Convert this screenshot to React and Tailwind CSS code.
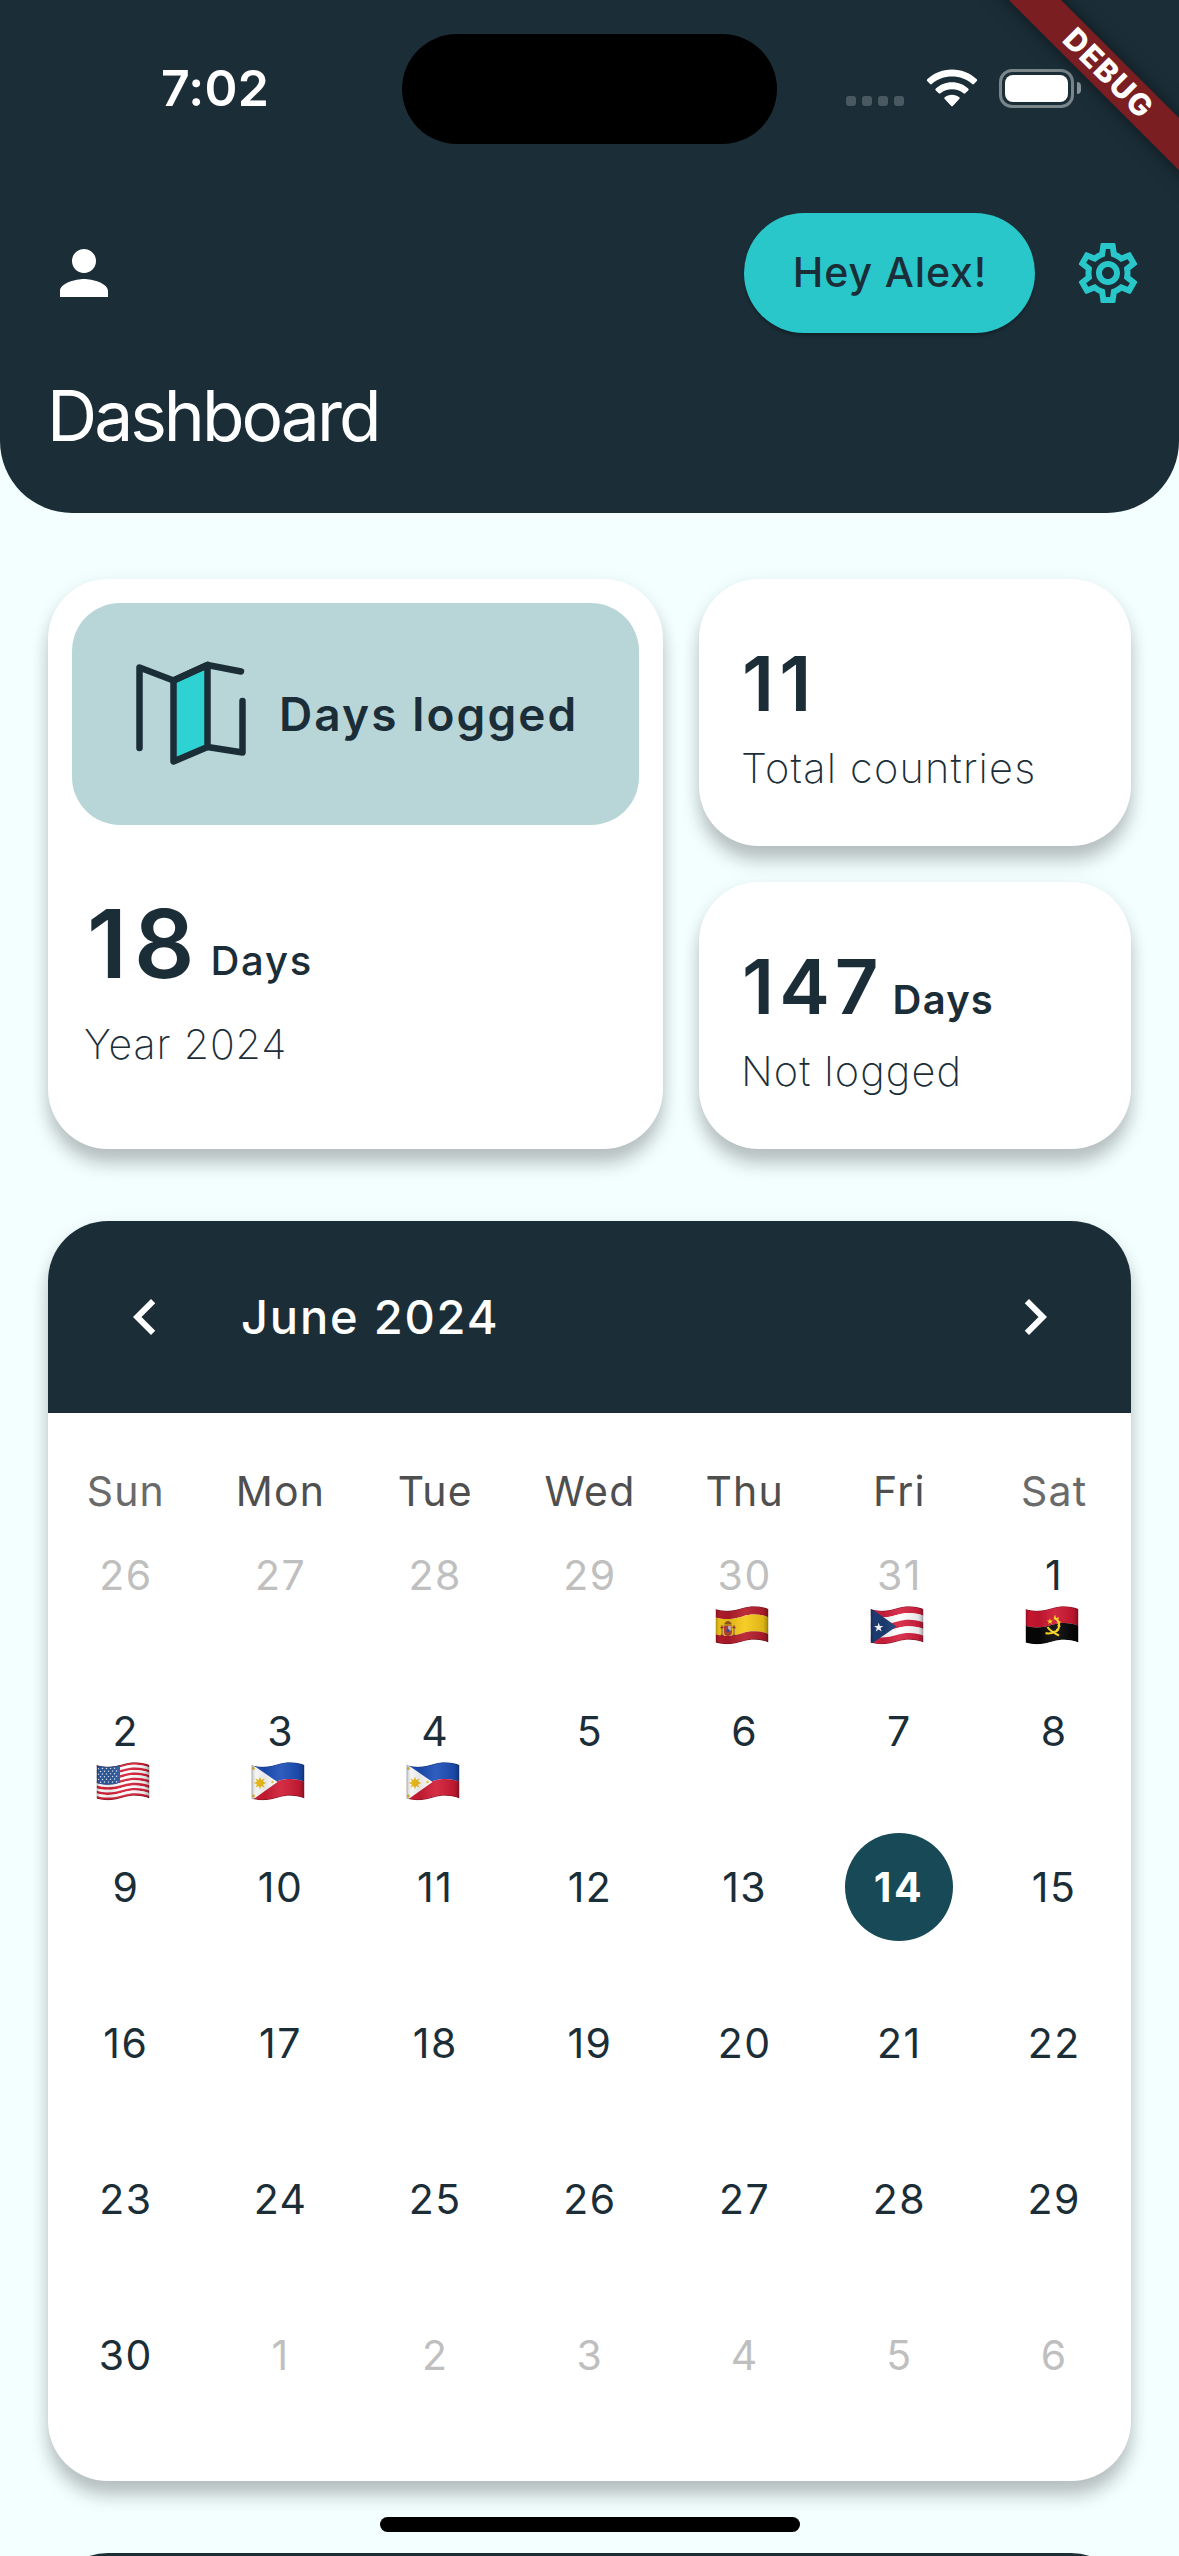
import { MdPerson, MdOutlineSettings, MdChevronLeft, MdChevronRight } from "react-icons/md";

const CARD_SHADOW = "shadow-[0_15px_17px_rgba(0,0,0,0.23),0_1px_18px_rgba(0,0,0,0.05)]";

// A horizontal band of a waving flag between two heights.
function band(a, b) {
  return `M0 ${a} C9 ${a + 3} 19 ${a + 1.5} 27 ${a - 1} C35 ${a - 3.5} 45 ${a - 3.5} 53 ${a} L53 ${b} C45 ${b - 3.5} 35 ${b - 3.5} 27 ${b - 1} C19 ${b + 1.5} 9 ${b + 3} 0 ${b}Z`;
}

const TOP = 3;
const HEIGHT = 33.5;

function Stripes({ colors, weights }) {
  const w = weights || colors.map(() => 1);
  const total = w.reduce((s, n) => s + n, 0);
  let y = TOP;
  return colors.map((c, i) => {
    const start = y;
    y += (w[i] / total) * HEIGHT;
    return <path key={i} d={band(start, y)} fill={c} />;
  });
}

function star(cx, cy, r, inner, n) {
  const pts = [];
  for (let i = 0; i < n * 2; i++) {
    const rad = i % 2 ? inner : r;
    const t = (Math.PI * i) / n - Math.PI / 2;
    pts.push(`${(cx + rad * Math.cos(t)).toFixed(2)},${(cy + rad * Math.sin(t)).toFixed(2)}`);
  }
  return pts.join(" ");
}

const FLAGS = {
  es: (
    <>
      <Stripes colors={["#b51c2b", "#f5c817", "#b51c2b"]} weights={[1, 2, 1]} />
      <path d="M6.500 19v10M18.500 19v10" stroke="#b9863a" strokeWidth="1.8" />
      <path d="M5 29.500h3M17 29.500h3M5 21.500h3M17 21.500h3" stroke="#8a2a2a" strokeWidth="1.300" />
      <path d="M8.500 19.500h8v6.500q0 3.500-4 4q-4-.5-4-4z" fill="#b5453a" />
      <path d="M12.500 20h3.500v4.500h-3.500z" fill="#d9b9c0" />
      <circle cx="12.500" cy="24.500" r="1.500" fill="#2f4f9e" />
      <path d="M9 18.500q-.5-2.500 3.500-3.500q4 1 3.500 3.500z" fill="#9a5a24" />
    </>
  ),
  pr: (
    <>
      <Stripes colors={["#d5203f", "#ffffff", "#d5203f", "#ffffff", "#d5203f"]} />
      <path d="M0 2L26 20.500L0 38.500z" fill="#1d3f77" />
      <polygon points={star(8.2, 21.5, 5, 1.9, 5)} fill="#fff" />
    </>
  ),
  ao: (
    <>
      <Stripes colors={["#ce1631", "#060606"]} />
      <path d="M28.500 12a7 7.500 0 0 1 1 14" fill="none" stroke="#f7d417" strokeWidth="2.200" />
      <path d="M29.500 9.500v3M33 11.500l-1.500 2M35 16h-3M35 20.500l-3-1M32.500 25l-1.500-2" stroke="#f7d417" strokeWidth="1.300" />
      <path d="M20 27q4.500 1.500 9.500-1.500M22 21q3 4.500 11.500 8.500" fill="none" stroke="#f7d417" strokeWidth="2.200" />
      <polygon points={star(24.5, 15.5, 3.2, 1.3, 5)} fill="#f7d417" />
    </>
  ),
  us: (
    <>
      <Stripes
        colors={["#d8213a", "#fff", "#d8213a", "#fff", "#d8213a", "#fff", "#d8213a", "#fff", "#d8213a", "#fff", "#d8213a", "#fff", "#d8213a"]}
      />
      <path d="M0 3C9 6 17 4.800 23.500 2.500V20.500C17 22.800 9 24 0 21z" fill="#2d5ba0" />
      {[6.5, 9.2, 11.9, 14.6, 17.3, 20].map((y, r) =>
        [2, 6, 10, 14, 18].map((x) => (
          <circle key={`${x}-${y}`} cx={x + (r % 2 ? 2 : 0)} cy={y + 0.3 - x * 0.03} r="0.750" fill="#e9f0fa" />
        ))
      )}
    </>
  ),
  ph: (
    <>
      <Stripes colors={["#1c4fb8", "#d01c35"]} />
      <path d="M0 2L26 20L0 38.500z" fill="#fff" />
      <polygon points={star(8.5, 21, 6.6, 3, 8)} fill="#efbf1c" />
      <circle cx="8.500" cy="21" r="3.600" fill="#f0c01a" />
      <circle cx="2" cy="6.500" r="1.400" fill="#efc53a" />
      <circle cx="2" cy="34" r="1.400" fill="#efc53a" />
      <circle cx="21" cy="20" r="1.300" fill="#efc53a" />
    </>
  ),
};

function Flag({ code, id }) {
  return (
    <svg className="absolute left-1/2 top-[85px] h-[39px] w-[53px] -translate-x-[28.5px]" viewBox="0 0 53 39">
      <defs>
        <clipPath id={`clip-${id}`}>
          <path d={band(TOP, TOP + HEIGHT)} />
        </clipPath>
        <linearGradient id={`shade-${id}`} x1="0" x2="1" y1="0" y2="0">
          <stop offset="0" stopColor="#000" stopOpacity="0.22" />
          <stop offset="0.08" stopColor="#000" stopOpacity="0.04" />
          <stop offset="0.25" stopColor="#000" stopOpacity="0.1" />
          <stop offset="0.55" stopColor="#fff" stopOpacity="0.08" />
          <stop offset="0.9" stopColor="#000" stopOpacity="0.1" />
          <stop offset="1" stopColor="#000" stopOpacity="0.35" />
        </linearGradient>
      </defs>
      <g clipPath={`url(#clip-${id})`}>
        {FLAGS[code]}
        <path d={band(TOP, TOP + HEIGHT)} fill={`url(#shade-${id})`} />
        <path d={band(TOP, TOP + HEIGHT)} fill="none" stroke="#000" strokeOpacity="0.25" strokeWidth="1.6" />
      </g>
    </svg>
  );
}

function MapIcon() {
  return (
    <svg className="h-[108px] w-[112px]" viewBox="0 0 112 108" fill="none" stroke="#1b2e38" strokeWidth="6.500" strokeLinecap="round" strokeLinejoin="round">
      <path d="M38.500 20.500L72.500 5V87L38.500 101.500z" fill="#2fd2d2" />
      <path d="M4.500 88V7.500L38.500 20.500L72.500 5L106 11.500" />
      <path d="M72.500 87L107.500 92.500V41" />
    </svg>
  );
}

function StatusBar() {
  return (
    <div className="flex h-[178px] w-full items-start">
      <div className="flex h-[176px] w-[402px] items-center pl-[161px] text-[50px] font-semibold leading-[60px] tracking-[0.2px]">7:02</div>
      <div className="mt-[34px] h-[110px] w-[375px] rounded-full bg-black" />
      <div className="flex h-[176px] flex-1 items-center pl-[69px]">
        <div className="mt-[26px] flex gap-[6px]">
          {[0, 1, 2, 3].map((i) => (
            <span key={i} className="h-[10px] w-[10px] rounded-[3px] bg-[#4a5961]" />
          ))}
        </div>
        <svg className="ml-[22px] h-[38px] w-[52px]" viewBox="0 0 52 38" fill="#fff">
          <path d="M26 .5C16 .5 7.500 4.300 1.200 10.300q-.9.900 0 1.800l2.900 2.900q.8.800 1.700 0C11.200 10.200 18.200 7.600 26 7.600s14.800 2.600 20.200 7.400q.9.800 1.700 0l2.900-2.900q.9-.9 0-1.800C44.500 4.300 36 .5 26 .5z" />
          <path d="M26 13.200c-6.300 0-12 2.400-16.200 6.300q-1 .9 0 1.900l3 2.900q.8.800 1.700 0C17.600 21.700 21.600 20.200 26 20.200s8.400 1.500 11.500 4.100q.9.800 1.700 0l3-2.900q1-1 0-1.900C38 15.600 32.300 13.200 26 13.200z" />
          <path d="M26 25.800c-2.800 0-5.300.9-7.300 2.500q-1 .8 0 1.700l6.300 6.700q1 1 2 0l6.300-6.700q1-.9 0-1.700c-2-1.600-4.500-2.500-7.300-2.500z" />
        </svg>
        <div className="ml-[21px] flex h-[39px] w-[75px] items-center justify-center rounded-[13px] border-[3px] border-[#7b868b]">
          <div className="h-[27px] w-[63px] rounded-[8px] bg-white" />
        </div>
        <div className="ml-[3px] h-[12px] w-[4px] rounded-r-full bg-[#8d979b]" />
      </div>
    </div>
  );
}

function StatCard({ value, unit, label, labelClass }) {
  return (
    <div className={`h-[267px] rounded-[60px] bg-white pl-[43px] pt-[68px] ${CARD_SHADOW}`}>
      <div className="flex h-[72px] items-baseline">
        <span className="text-[76px] font-semibold leading-[72px] tracking-[5px]">{value}</span>
        {unit && <span className="ml-[9px] text-[40px] font-semibold leading-[48px] tracking-[1.2px]">{unit}</span>}
      </div>
      <div className={`-ml-px mt-[25px] whitespace-nowrap text-[41.500px] font-[150] leading-[48px] ${labelClass}`}>{label}</div>
    </div>
  );
}

const WEEKDAYS = ["Sun", "Mon", "Tue", "Wed", "Thu", "Fri", "Sat"];
const EVENTS = { 4: "es", 5: "pr", 6: "ao", 7: "us", 8: "ph", 9: "ph" };
const DAYS = Array.from({ length: 42 }, (_, i) => {
  if (i < 6) return { n: 26 + i, out: true };
  if (i < 36) return { n: i - 5, out: false };
  return { n: i - 35, out: true };
});

function Calendar() {
  return (
    <section className={`mt-[72px] h-[1260px] overflow-hidden rounded-[60px] bg-white ${CARD_SHADOW}`}>
      <div className="flex h-[192px] items-center bg-[#1b2e38] pl-[61px] pr-[60px] text-white">
        <MdChevronLeft size={72} />
        <h2 className="ml-[60px] flex-1 text-[47px] font-medium leading-[60px] tracking-[1.8px]">June 2024</h2>
        <MdChevronRight size={72} />
      </div>
      <div className="mt-[54px] grid grid-cols-7 text-center text-[41px] leading-[48px] tracking-[1.2px]">
        {WEEKDAYS.map((d, i) => (
          <span key={d} className={i === 0 || i === 6 ? "pl-px text-[#6a6a6a]" : "pl-px text-[#4f4f4f]"}>{d}</span>
        ))}
      </div>
      <div className="mt-[6px] grid grid-cols-7 gap-y-[48px]">
        {DAYS.map((d, i) => (
          <div key={i} className="relative flex h-[108px] justify-center">
            {i === 19 ? (
              <span className="flex size-[108px] items-center justify-center rounded-full bg-[#174a56] pt-[2px] text-[41px] font-bold tracking-[2.5px] text-white">{d.n}</span>
            ) : (
              <span className={`flex items-center pl-px pt-[2px] text-[41px] tracking-[1.5px] ${d.out ? "text-[#bfbfbf]" : "text-[#1b2e38]"}`}>{d.n}</span>
            )}
            {EVENTS[i] && <Flag code={EVENTS[i]} id={i} />}
          </div>
        ))}
      </div>
    </section>
  );
}

export default function App() {
  return (
    <div className="relative h-[2556px] w-[1179px] overflow-hidden bg-[#f3ffff] font-['Inter',sans-serif] text-[#1b2e38]">
      <header className="h-[513px] rounded-b-[72px] bg-[#1b2e38] text-white">
        <StatusBar />
        <div className="mt-[35px] flex h-[120px] items-center pl-[48px] pr-[35px]">
          <MdPerson size={72} />
          <button className="ml-auto flex h-[120px] w-[291px] items-center justify-center whitespace-nowrap rounded-full bg-[#29c7c9] pl-px text-[41px] font-medium tracking-[0.9px] text-[#1b2e38] shadow-[0_3px_3px_rgba(0,0,0,0.25)]">
            Hey Alex!
          </button>
          <MdOutlineSettings size={72} className="ml-[37px] text-[#29c7c9]" />
        </div>
        <h1 className="mt-[41px] pl-[47px] text-[69.500px] font-normal leading-[84px] tracking-[-3px]">Dashboard</h1>
      </header>

      <main className="px-[48px] pt-[66px]">
        <div className="flex gap-[36px]">
          <div className={`h-[570px] w-[615px] rounded-[60px] bg-white p-[24px] ${CARD_SHADOW}`}>
            <div className="flex h-[222px] items-center rounded-[48px] bg-[#b8d6d8] pl-[63px]">
              <MapIcon />
              <span className="ml-[32px] whitespace-nowrap text-[46px] font-semibold leading-[56px] tracking-[2.1px]">Days logged</span>
            </div>
            <div className="mt-[79px] flex h-[80px] items-baseline pl-[15px]">
              <span className="text-[94.500px] font-semibold leading-[80px] tracking-[7px]">18</span>
              <span className="ml-[9px] -translate-y-[3px] text-[40px] font-medium leading-[48px] tracking-[1.8px]">Days</span>
            </div>
            <div className="mt-[36px] pl-[12px] text-[41px] font-[150] leading-[48px] tracking-[0.9px]">Year 2024</div>
          </div>
          <div className="flex w-[432px] flex-col gap-[36px]">
            <StatCard value="11" label="Total countries" labelClass="tracking-[1.2px]" />
            <StatCard value="147" unit="Days" label="Not logged" labelClass="tracking-[1.1px]" />
          </div>
        </div>
        <Calendar />
        <div className="mt-[72px] h-[192px] rounded-t-[60px] bg-[#1b2e38]" />
      </main>

      <div className="absolute left-[380px] top-[2517px] h-[15px] w-[420px] rounded-full bg-black" />

      <div className="absolute left-[957px] top-[54px] flex h-[36.500px] w-[301px] rotate-45 items-center justify-center bg-[#7a1e21] pl-[3px] text-[30.500px] font-extrabold tracking-[1.4px] text-white shadow-[0_0_18px_rgba(0,0,0,0.5)]">
        DEBUG
      </div>
    </div>
  );
}
